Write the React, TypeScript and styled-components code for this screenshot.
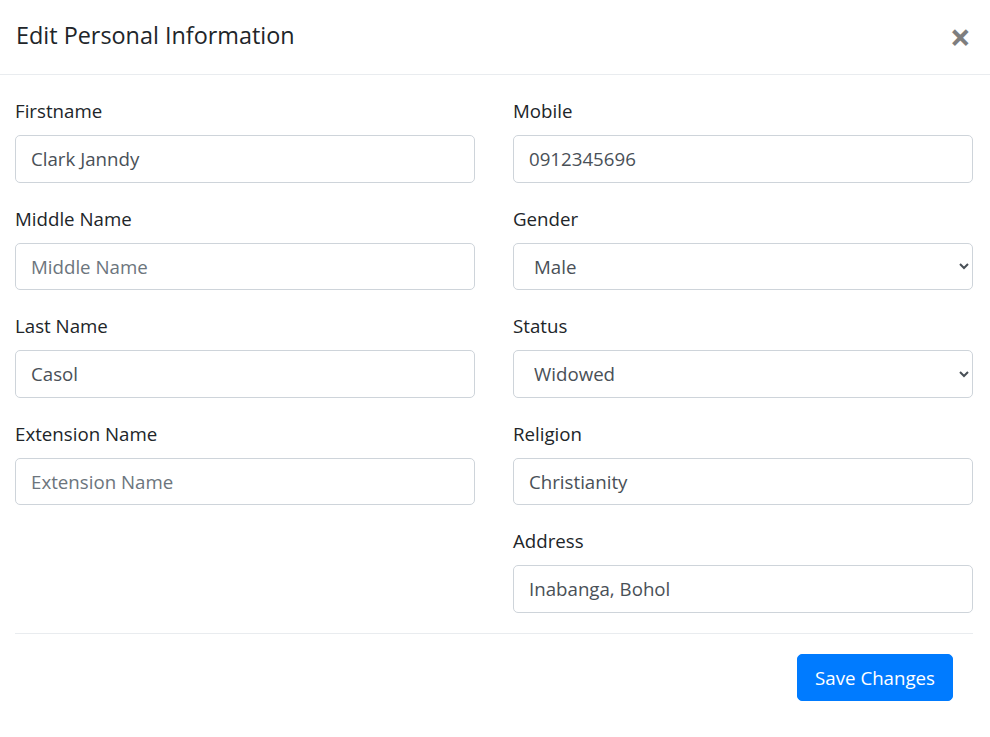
import React from 'react';
import styled, { createGlobalStyle } from 'styled-components';

const GlobalStyle = createGlobalStyle`
  * { box-sizing: border-box; }
  body {
    margin: 0;
    background: #fff;
    font-family: 'Open Sans', 'Noto Sans', sans-serif;
    color: #212529;
  }
`;

interface Field {
  label: string;
  value?: string;
  placeholder?: string;
  options?: string[];
}

const leftFields: Field[] = [
  { label: 'Firstname', value: 'Clark Janndy' },
  { label: 'Middle Name', placeholder: 'Middle Name' },
  { label: 'Last Name', value: 'Casol' },
  { label: 'Extension Name', placeholder: 'Extension Name' },
];

const rightFields: Field[] = [
  { label: 'Mobile', value: '0912345696' },
  { label: 'Gender', value: 'Male', options: ['Male', 'Female'] },
  { label: 'Status', value: 'Widowed', options: ['Single', 'Married', 'Widowed'] },
  { label: 'Religion', value: 'Christianity' },
  { label: 'Address', value: 'Inabanga, Bohol' },
];

const FormField = ({ label, value, placeholder, options }: Field) => (
  <Group>
    <Label>{label}</Label>
    {options ? (
      <Select defaultValue={value}>
        {options.map((o) => (
          <option key={o}>{o}</option>
        ))}
      </Select>
    ) : (
      <Input defaultValue={value} placeholder={placeholder} />
    )}
  </Group>
);

const App = () => {
  return (
    <>
      <GlobalStyle />
      <Modal>
        <Header>
          <Title>Edit Personal Information</Title>
          <Close aria-label="Close">×</Close>
        </Header>
        <Body>
          <Columns>
            <Column>
              {leftFields.map((f) => (
                <FormField key={f.label} {...f} />
              ))}
            </Column>
            <Column>
              {rightFields.map((f) => (
                <FormField key={f.label} {...f} />
              ))}
            </Column>
          </Columns>
          <Footer>
            <SaveButton>Save Changes</SaveButton>
          </Footer>
        </Body>
      </Modal>
    </>
  );
};

const Modal = styled.div`
  width: 990px;
  background: #fff;
`;

const Header = styled.div`
  height: 75px;
  display: flex;
  align-items: center;
  justify-content: space-between;
  padding: 0 19px 2px 16px;
  border-bottom: 1px solid #e9ecef;
`;

const Title = styled.h5`
  margin: 0;
  font-size: 23.4px;
  font-weight: 400;
  line-height: 1.5;
`;

const Close = styled.button`
  border: 0;
  background: transparent;
  padding: 0;
  font-family: 'Open Sans', sans-serif;
  font-size: 37px;
  font-weight: 700;
  line-height: 1;
  color: #000;
  opacity: 0.5;
  cursor: pointer;
`;

const Body = styled.div`
  padding: 20px 17px 0 15px;
`;

const Columns = styled.div`
  display: grid;
  grid-template-columns: 460px 460px;
  column-gap: 38px;
  border-bottom: 1px solid #e9ecef;
`;

const Column = styled.div`
  display: flex;
  flex-direction: column;
`;

const Group = styled.div`
  margin-bottom: 20px;
`;

const Label = styled.label`
  display: block;
  font-size: 18.7px;
  line-height: 30px;
  padding-top: 1px;
  margin-bottom: 9px;
`;

const Input = styled.input`
  display: block;
  width: 100%;
  height: 47.5px;
  padding: 7.5px 15px;
  font-family: inherit;
  font-size: 18.7px;
  color: #495057;
  border: 1px solid #ced4da;
  border-radius: 5px;
  outline: none;

  &::placeholder {
    color: #6c757d;
  }
`;

const Select = styled.select`
  display: block;
  width: 100%;
  height: 47.5px;
  padding: 7.5px 16px;
  font-family: inherit;
  font-size: 18.7px;
  color: #495057;
  background: #fff;
  border: 1px solid #ced4da;
  border-radius: 5px;
  outline: none;
`;

const Footer = styled.div`
  display: flex;
  justify-content: flex-end;
  padding: 20px 20px 36px 0;
`;

const SaveButton = styled.button`
  height: 47.5px;
  padding: 0 17px;
  font-family: 'Open Sans', sans-serif;
  font-size: 18.7px;
  color: #fff;
  background: #007bff;
  border: 1px solid #007bff;
  border-radius: 5px;
  cursor: pointer;
`;

export default App;
